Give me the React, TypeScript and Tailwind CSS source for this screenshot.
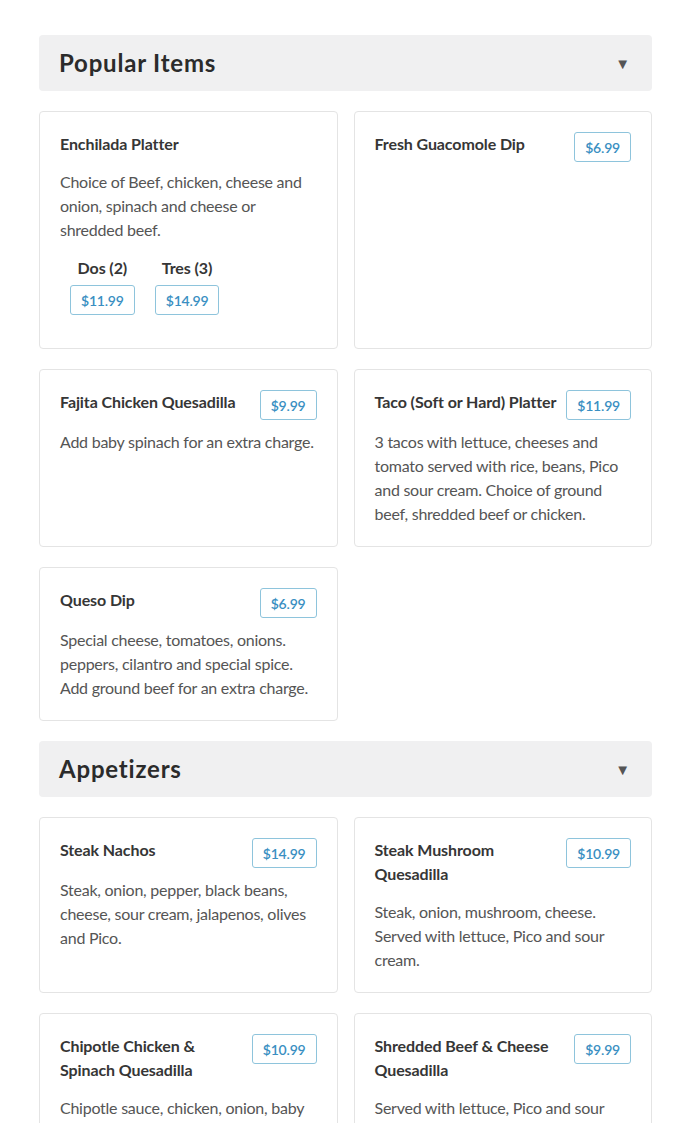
type Item = {
  name: string;
  price?: string;
  desc?: string;
  options?: { label: string; price: string }[];
};

type Section = {
  title: string;
  items: Item[];
};

const sections: Section[] = [
  {
    title: "Popular Items",
    items: [
      {
        name: "Enchilada Platter",
        desc: "Choice of Beef, chicken, cheese and onion, spinach and cheese or shredded beef.",
        options: [
          { label: "Dos (2)", price: "$11.99" },
          { label: "Tres (3)", price: "$14.99" },
        ],
      },
      { name: "Fresh Guacomole Dip", price: "$6.99" },
      {
        name: "Fajita Chicken Quesadilla",
        price: "$9.99",
        desc: "Add baby spinach for an extra charge.",
      },
      {
        name: "Taco (Soft or Hard) Platter",
        price: "$11.99",
        desc: "3 tacos with lettuce, cheeses and tomato served with rice, beans, Pico and sour cream. Choice of ground beef, shredded beef or chicken.",
      },
      {
        name: "Queso Dip",
        price: "$6.99",
        desc: "Special cheese, tomatoes, onions. peppers, cilantro and special spice. Add ground beef for an extra charge.",
      },
    ],
  },
  {
    title: "Appetizers",
    items: [
      {
        name: "Steak Nachos",
        price: "$14.99",
        desc: "Steak, onion, pepper, black beans, cheese, sour cream, jalapenos, olives and Pico.",
      },
      {
        name: "Steak Mushroom Quesadilla",
        price: "$10.99",
        desc: "Steak, onion, mushroom, cheese. Served with lettuce, Pico and sour cream.",
      },
      {
        name: "Chipotle Chicken & Spinach Quesadilla",
        price: "$10.99",
        desc: "Chipotle sauce, chicken, onion, baby spinach and cheese. Served with lettuce, Pico and sour cream.",
      },
      {
        name: "Shredded Beef & Cheese Quesadilla",
        price: "$9.99",
        desc: "Served with lettuce, Pico and sour cream.",
      },
    ],
  },
];

function Price({ value, className = "" }: { value: string; className?: string }) {
  return (
    <span
      className={`inline-flex h-[30px] shrink-0 items-center rounded-[3px] border border-[#8ec4dc] px-[10px] text-[14px] font-semibold tracking-[-0.2px] text-[#3a8fc2] ${className}`}
    >
      {value}
    </span>
  );
}

function ItemCard({ item }: { item: Item }) {
  return (
    <div className="rounded-[4px] border border-[#e4e4e4] bg-white p-5">
      <div className="flex items-start justify-between gap-1">
        <h3 className="mb-[14px] text-[16px] font-bold leading-6 tracking-[-0.1px] text-[#363636]">
          {item.name}
        </h3>
        {item.price && <Price value={item.price} className="mb-[10px]" />}
      </div>
      {item.desc && (
        <p className="text-[16px] leading-6 tracking-[-0.25px] text-[#555]">
          {item.desc}
        </p>
      )}
      {item.options && (
        <div className="mt-[14px] mb-[13px] flex">
          {item.options.map((o) => (
            <div key={o.label} className="flex flex-col items-center px-[10px]">
              <span className="mb-[5px] text-[16px] font-bold leading-6 tracking-[-0.1px] text-[#363636]">
                {o.label}
              </span>
              <Price value={o.price} />
            </div>
          ))}
        </div>
      )}
    </div>
  );
}

export default function App() {
  return (
    <div
      className="min-h-screen bg-white pt-[35px] pl-[39px] pr-[38px]"
      style={{ fontFamily: "Lato, 'Open Sans', sans-serif" }}
    >
      {sections.map((s) => (
        <section key={s.title} className="mb-5">
          <button className="mb-5 flex h-14 w-full items-center justify-between rounded-[4px] bg-[#f0f0f1] pl-5 pr-[22px] text-left">
            <h2 className="text-[24px] font-bold tracking-[0.8px] text-[#2b2b2b]">
              {s.title}
            </h2>
            <span className="text-[15px] text-[#555]">▼</span>
          </button>
          <div className="grid grid-cols-2 gap-x-4 gap-y-5">
            {s.items.map((it) => (
              <ItemCard key={it.name} item={it} />
            ))}
          </div>
        </section>
      ))}
    </div>
  );
}
